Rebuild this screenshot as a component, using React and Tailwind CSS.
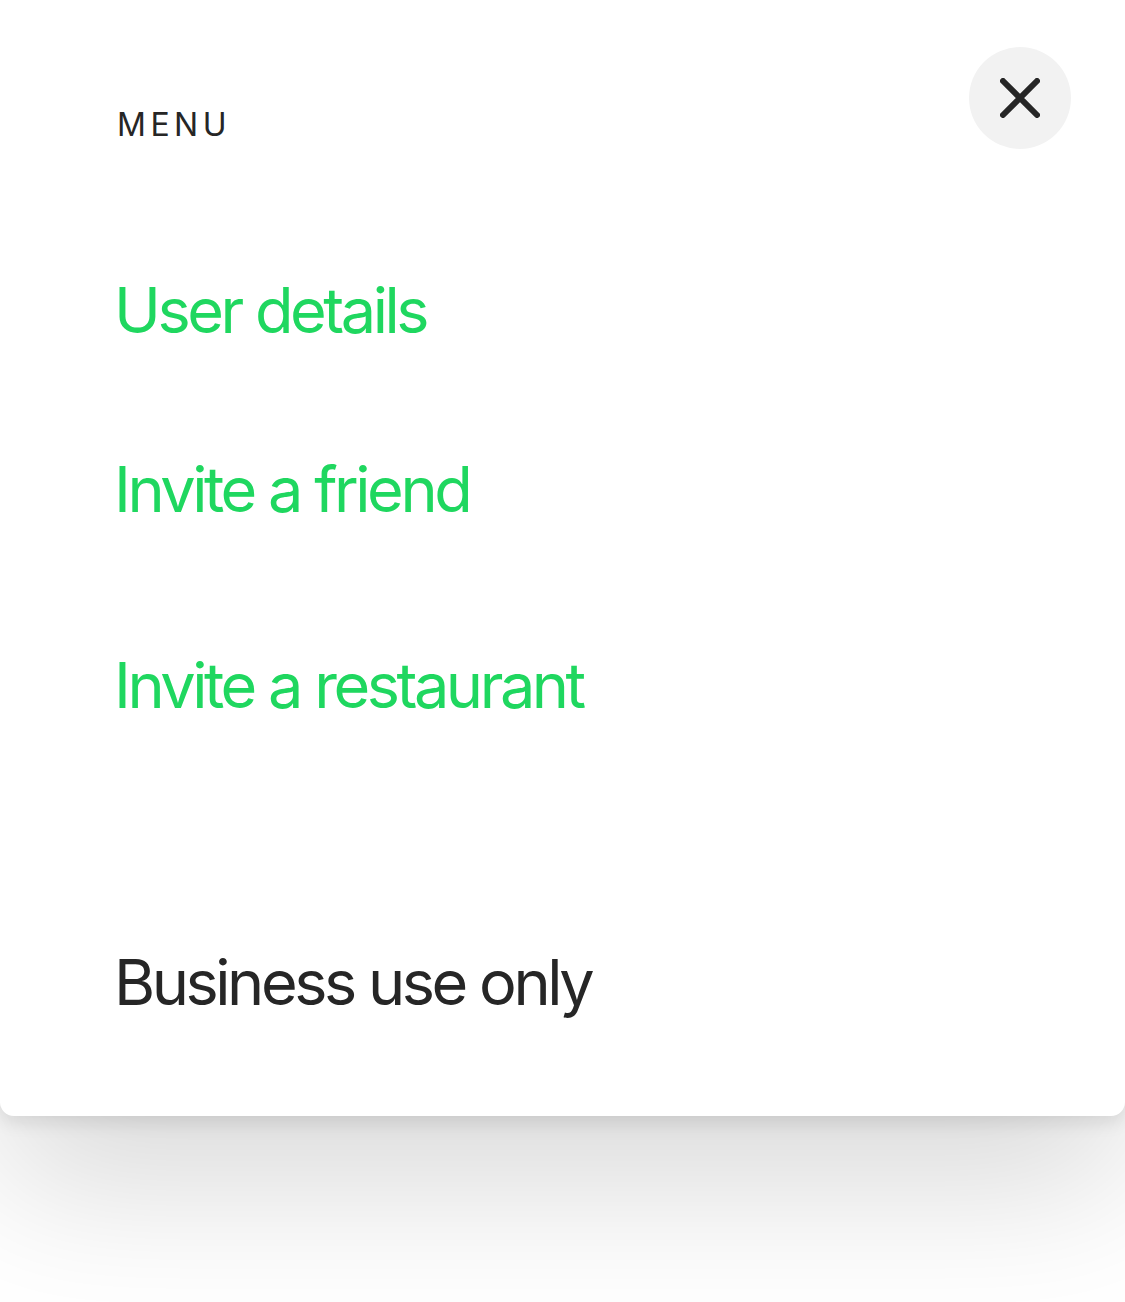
import React from 'react';

const links = [
  { label: 'User details', className: 'mt-[130px]' },
  { label: 'Invite a friend', className: 'mt-[116px]' },
  { label: 'Invite a restaurant', className: 'mt-[133px]' },
];

const App = () => {
  return (
    <div className="min-h-screen bg-white font-['Inter',sans-serif]">
      {/* Menu sheet */}
      <div className="bg-white rounded-b-[14px] shadow-[0_6px_18px_rgba(0,0,0,0.1),0_70px_150px_rgba(0,0,0,0.15)] h-[1116px] pl-[114px] pr-[54px] pt-[47px]">
        <div className="flex items-start justify-between">
          <p className="mt-[62px] ml-[3px] text-[32px] leading-none tracking-[0.14em] text-[#262626]">MENU</p>
          <button className="w-[102px] h-[102px] rounded-full bg-[#f2f2f2] flex items-center justify-center">
            <svg width="40" height="40" viewBox="0 0 40 40" fill="none">
              <path d="M3 3 L37 37 M37 3 L3 37" stroke="#262626" strokeWidth="6" strokeLinecap="round" />
            </svg>
          </button>
        </div>

        <nav className="flex flex-col">
          {links.map((link) => (
            <a
              key={link.label}
              href="#"
              className={`${link.className} text-[63px] leading-none tracking-[-0.055em] text-[#1fd75f]`}
            >
              {link.label}
            </a>
          ))}
          <p className="mt-[234px] text-[63px] leading-none tracking-[-0.055em] text-[#262626]">
            Business use only
          </p>
        </nav>
      </div>
    </div>
  );
};

export default App;
